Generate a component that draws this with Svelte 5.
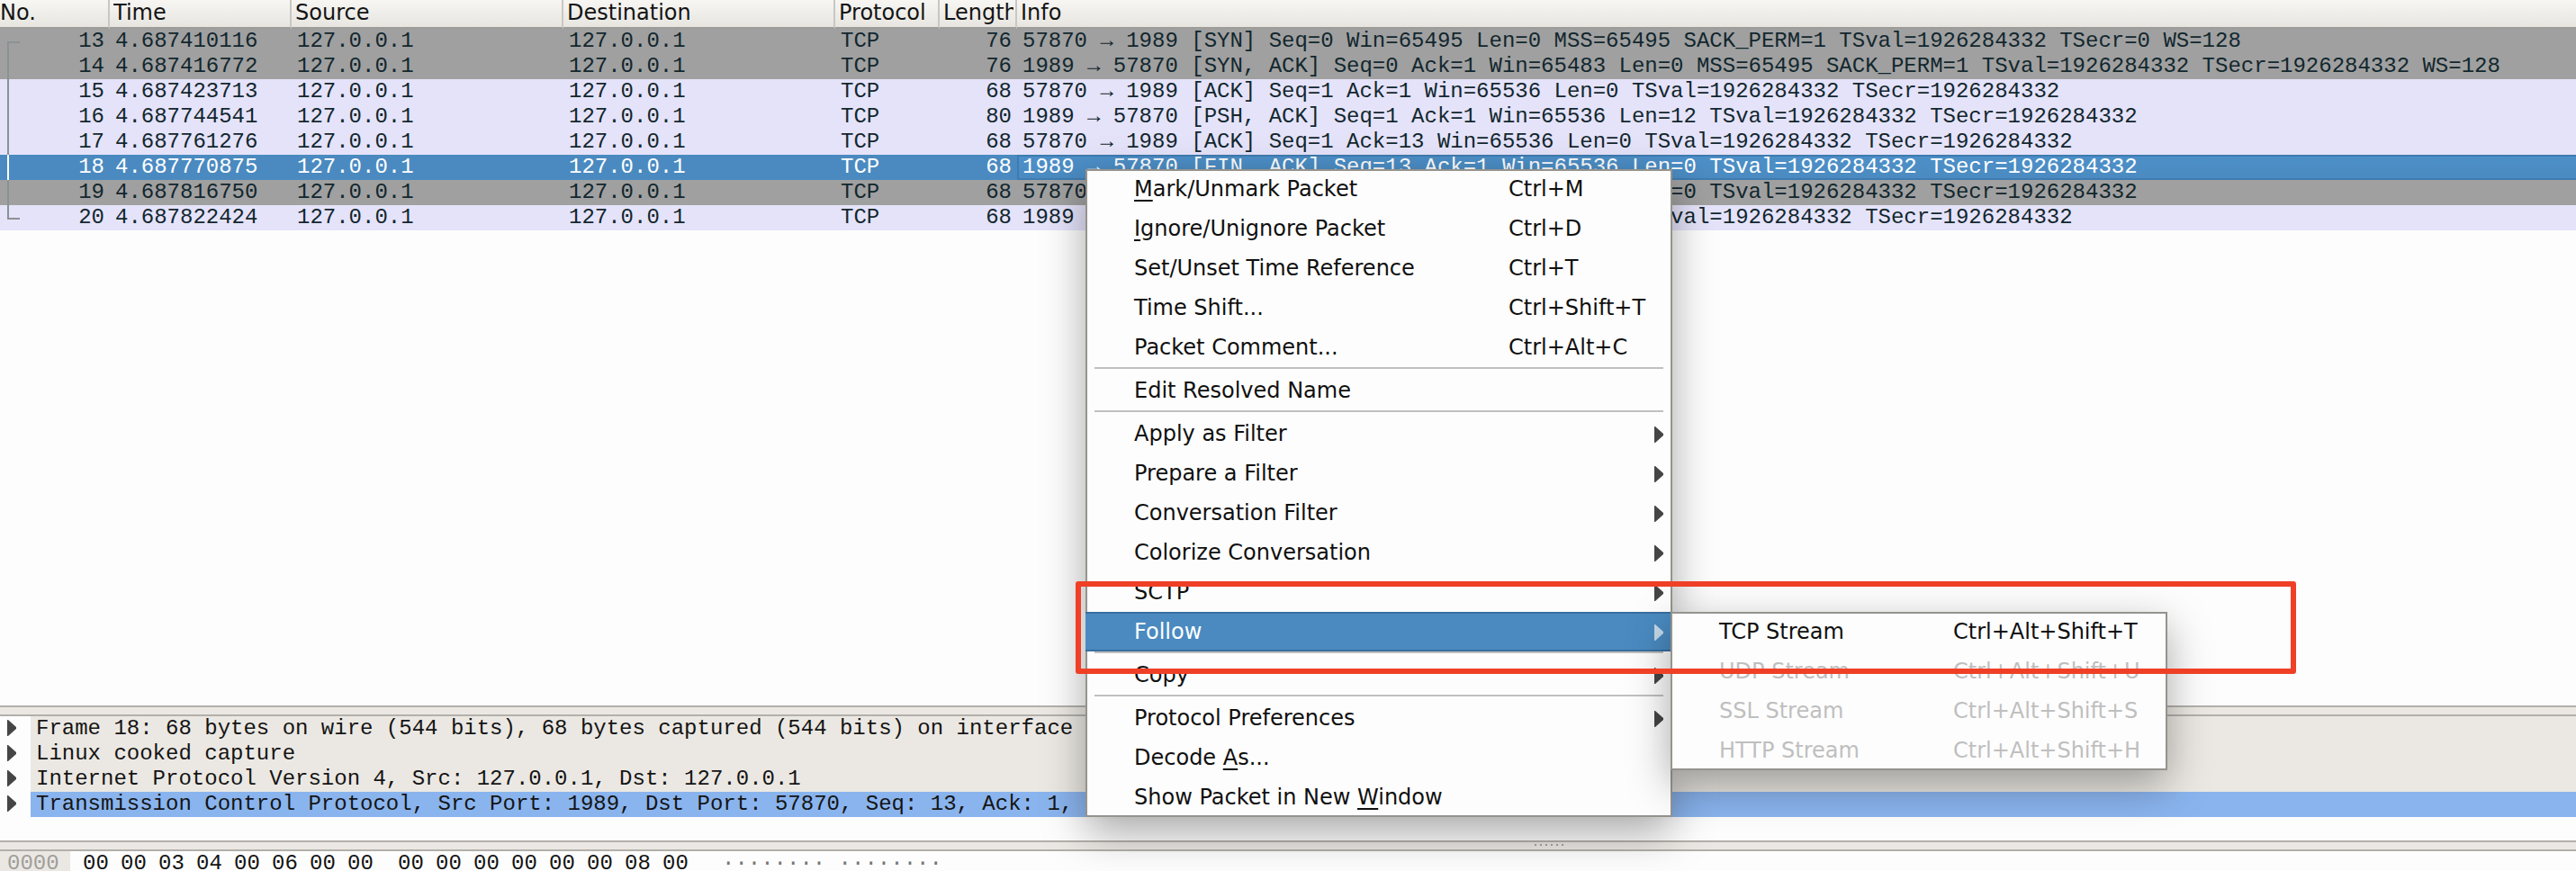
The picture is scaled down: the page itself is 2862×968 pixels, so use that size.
<script>
  const columns = ['No.', 'Time', 'Source', 'Destination', 'Protocol', 'Length', 'Info'];

  const packets = [
    { no: 13, time: '4.687410116', len: 76, kind: 'syn', link: 'start', info: '57870 → 1989 [SYN] Seq=0 Win=65495 Len=0 MSS=65495 SACK_PERM=1 TSval=1926284332 TSecr=0 WS=128' },
    { no: 14, time: '4.687416772', len: 76, kind: 'syn', link: 'mid', info: '1989 → 57870 [SYN, ACK] Seq=0 Ack=1 Win=65483 Len=0 MSS=65495 SACK_PERM=1 TSval=1926284332 TSecr=1926284332 WS=128' },
    { no: 15, time: '4.687423713', len: 68, kind: 'tcp', link: 'mid', info: '57870 → 1989 [ACK] Seq=1 Ack=1 Win=65536 Len=0 TSval=1926284332 TSecr=1926284332' },
    { no: 16, time: '4.687744541', len: 80, kind: 'tcp', link: 'mid', info: '1989 → 57870 [PSH, ACK] Seq=1 Ack=1 Win=65536 Len=12 TSval=1926284332 TSecr=1926284332' },
    { no: 17, time: '4.687761276', len: 68, kind: 'tcp', link: 'mid', info: '57870 → 1989 [ACK] Seq=1 Ack=13 Win=65536 Len=0 TSval=1926284332 TSecr=1926284332' },
    { no: 18, time: '4.687770875', len: 68, kind: 'selected', link: 'mid', info: '1989 → 57870 [FIN, ACK] Seq=13 Ack=1 Win=65536 Len=0 TSval=1926284332 TSecr=1926284332' },
    { no: 19, time: '4.687816750', len: 68, kind: 'syn', link: 'mid', info: '57870 → 1989 [FIN, ACK] Seq=1 Ack=14 Win=65536 Len=0 TSval=1926284332 TSecr=1926284332' },
    { no: 20, time: '4.687822424', len: 68, kind: 'tcp', link: 'end', info: '1989 → 57870 [ACK] Seq=14 Ack=2 Win=65536 Len=0 TSval=1926284332 TSecr=1926284332' }
  ];

  const details = [
    'Frame 18: 68 bytes on wire (544 bits), 68 bytes captured (544 bits) on interface 0',
    'Linux cooked capture',
    'Internet Protocol Version 4, Src: 127.0.0.1, Dst: 127.0.0.1',
    'Transmission Control Protocol, Src Port: 1989, Dst Port: 57870, Seq: 13, Ack: 1, Len: 0'
  ];
  let chosen = $state(3);

  const byteGroups = [
    ['00', '00', '03', '04', '00', '06', '00', '00'],
    ['00', '00', '00', '00', '00', '00', '08', '00']
  ];

  // Labels are split as [before, mnemonic, after].
  const menu = [
    { label: ['', 'M', 'ark/Unmark Packet'], keys: 'Ctrl+M' },
    { label: ['', 'I', 'gnore/Unignore Packet'], keys: 'Ctrl+D' },
    { label: ['Set/Unset Time Reference'], keys: 'Ctrl+T' },
    { label: ['Time Shift...'], keys: 'Ctrl+Shift+T' },
    { label: ['Packet Comment...'], keys: 'Ctrl+Alt+C' },
    null,
    { label: ['Edit Resolved Name'] },
    null,
    { label: ['Apply as Filter'], sub: true },
    { label: ['Prepare a Filter'], sub: true },
    { label: ['Conversation Filter'], sub: true },
    { label: ['Colorize Conversation'], sub: true },
    { label: ['SCTP'], sub: true },
    { label: ['Follow'], sub: true, open: true },
    null,
    { label: ['Copy'], sub: true },
    null,
    { label: ['Protocol Preferences'], sub: true },
    { label: ['Decode ', 'A', 's...'] },
    { label: ['Show Packet in New ', 'W', 'indow'] }
  ];

  const streams = [
    { name: 'TCP Stream', keys: 'Ctrl+Alt+Shift+T', on: true },
    { name: 'UDP Stream', keys: 'Ctrl+Alt+Shift+U', on: false },
    { name: 'SSL Stream', keys: 'Ctrl+Alt+Shift+S', on: false },
    { name: 'HTTP Stream', keys: 'Ctrl+Alt+Shift+H', on: false }
  ];
</script>

{#snippet arrow()}
  <svg class="arrow" viewBox="0 0 10 18" aria-hidden="true"><path d="M0 0H1L10 8V10L1 18H0Z" fill="currentColor" /></svg>
{/snippet}

<main class="window">
  <section class="list">
    <table>
      <colgroup>
        <col class="c-no" /><col class="c-time" /><col class="c-addr" /><col class="c-addr" />
        <col class="c-proto" /><col class="c-len" /><col />
      </colgroup>
      <thead>
        <tr>
          {#each columns as name}<th scope="col"><div>{name}</div></th>{/each}
        </tr>
      </thead>
      <tbody>
        {#each packets as p}
          <tr class={p.kind}>
            <td class="num"><span class="link {p.link}"></span>{p.no}</td>
            <td>{p.time}</td>
            <td>127.0.0.1</td>
            <td>127.0.0.1</td>
            <td>TCP</td>
            <td class="num">{p.len}</td>
            <td class="info">{p.info}</td>
          </tr>
        {/each}
      </tbody>
    </table>
  </section>

  <div class="splitter"></div>

  <section class="details">
    {#each details as line, i}
      <button class="detail" class:chosen={chosen === i} onclick={() => (chosen = i)}>
        <span class="twist">{@render arrow()}</span><span class="line">{line}</span>
      </button>
    {/each}
  </section>

  <div class="splitter">
    <span class="grip"><i></i><i></i><i></i><i></i><i></i><i></i></span>
  </div>

  <section class="bytes">
    <span class="offset">0000</span>
    <div class="hex">
      {#each byteGroups as group}
        <div class="group">{#each group as b}<span>{b}</span>{/each}</div>
      {/each}
    </div>
    <span class="ascii">········ ········</span>
  </section>

  <ul class="menu main" role="menu">
    {#each menu as item}
      {#if item}
        <li role="none">
          <button role="menuitem" class:open={item.open}>
            <span class="label">{item.label[0]}{#if item.label[1]}<u>{item.label[1]}</u>{item.label[2]}{/if}</span>
            {#if item.keys}<span class="keys">{item.keys}</span>{/if}
            {#if item.sub}{@render arrow()}{/if}
          </button>
        </li>
      {:else}
        <li class="sep" role="separator"></li>
      {/if}
    {/each}
  </ul>

  <ul class="menu sub" role="menu">
    {#each streams as s}
      <li role="none">
        <button role="menuitem" disabled={!s.on}>
          <span class="label">{s.name}</span><span class="keys">{s.keys}</span>
        </button>
      </li>
    {/each}
  </ul>

  <div class="highlight"></div>
</main>

<style>
  :global(body) {
    margin: 0;
    background: #fdfdfd;
  }
  .window {
    position: relative;
    display: flex;
    flex-direction: column;
    height: 100vh;
    overflow: hidden;
    background: #fdfdfd;
    color: #141414;
    font: 24px/28px 'Liberation Mono', monospace;
  }
  button {
    appearance: none;
    border: 0;
    margin: 0;
    padding: 0;
    background: none;
    color: inherit;
    font: inherit;
    text-align: left;
  }

  .list {
    flex: 1;
    min-height: 0;
    overflow: hidden;
  }
  table {
    width: 100%;
    table-layout: fixed;
    border-collapse: separate;
    border-spacing: 0;
  }
  .c-no { width: 122px; }
  .c-time { width: 202px; }
  .c-addr { width: 302px; }
  .c-proto { width: 116px; }
  .c-len { width: 86px; }
  th {
    box-sizing: border-box;
    height: 32px;
    padding: 0 2px 2px 4px;
    border-right: 2px solid #c9c7c3;
    border-bottom: 2px solid #9e9c98;
    background: linear-gradient(#f7f6f3, #e7e5e0);
    font: 24px/28px 'DejaVu Sans', sans-serif;
    text-align: left;
  }
  th:first-child { padding-left: 0; }
  th:last-child { border-right: 0; }
  th div {
    overflow: hidden;
    white-space: nowrap;
  }
  td {
    height: 28px;
    padding: 0 6px;
    overflow: hidden;
    white-space: nowrap;
    color: #12272e;
  }
  .num {
    position: relative;
    text-align: right;
  }
  .syn td { background: #a0a0a0; }
  .tcp td { background: #e5e3fa; }
  .selected td {
    background: #4a8ac0;
    color: #ffffff;
  }
  .selected .info {
    background: linear-gradient(#4d90c9, #4a8ac0);
    box-shadow: inset 0 2px #3f7bb0, inset 2px -2px #3f7bb0;
  }
  .link {
    position: absolute;
    left: 8px;
    top: 0;
    bottom: 0;
    width: 12px;
    border-left: 2px solid #8a9294;
  }
  .link.start {
    top: 14px;
    border-top: 2px solid #8a9294;
  }
  .link.end {
    bottom: 12px;
    border-bottom: 2px solid #8a9294;
  }
  .selected .link { border-color: #ffffff; }

  .splitter {
    box-sizing: border-box;
    height: 12px;
    flex: none;
    border: solid #b3b0ac;
    border-width: 2px 0;
    background: #ebe7e2;
  }
  .grip {
    display: flex;
    gap: 4px;
    padding: 2px 0 0 calc(60% - 12px);
  }
  .grip i {
    width: 2px;
    height: 2px;
    background: #a5a29d;
  }

  .details {
    flex: none;
    display: flex;
    flex-direction: column;
    padding-bottom: 26px;
  }
  .detail {
    display: flex;
    height: 28px;
  }
  .twist {
    width: 26px;
    padding: 4px 0 0 8px;
    color: #454545;
  }
  .line {
    flex: 1;
    padding-left: 6px;
    background: #ebe8e3;
    white-space: nowrap;
  }
  .chosen .line { background: #8ab4ee; }
  .arrow {
    display: block;
    width: 10px;
    height: 18px;
  }

  .bytes {
    flex: none;
    display: flex;
    height: 22px;
    overflow: hidden;
  }
  .offset {
    width: 70px;
    padding-left: 8px;
    background: #ebe8e3;
    color: #a09e9b;
  }
  .hex {
    display: flex;
    gap: 14px;
    padding-left: 14px;
  }
  .group { display: flex; }
  .group span { width: 42px; }
  .ascii {
    padding-left: 24px;
    color: #777777;
  }

  .menu {
    position: absolute;
    box-sizing: border-box;
    margin: 0;
    padding: 0;
    list-style: none;
    background: #fdfdfd;
    box-shadow: inset 0 0 0 2px #95938e, 0 16px 44px rgba(0, 0, 0, 0.34);
    font: 24px/28px 'DejaVu Sans', sans-serif;
    color: #101010;
  }
  .menu.main {
    left: 1206px;
    top: 188px;
    width: 652px;
  }
  .menu.sub {
    left: 1856px;
    top: 680px;
    width: 552px;
  }
  .menu button {
    box-sizing: border-box;
    display: flex;
    align-items: center;
    width: 100%;
    height: 44px;
    padding: 0 10px 0 54px;
    white-space: nowrap;
  }
  .menu button.open {
    width: calc(100% - 2px);
    padding-right: 8px;
    background: #4a8ac0;
    box-shadow: inset 0 2px #386f9f, inset 0 -2px #386f9f;
    color: #ffffff;
  }
  .menu button:disabled { color: #bfbfbf; }
  .label { flex: 1; }
  .keys { width: 172px; }
  .sub .keys { width: 228px; }
  .menu .arrow {
    color: #454545;
    margin-top: 2px;
  }
  .menu .open .arrow { color: #c4d9ea; }
  u {
    text-decoration-thickness: 2px;
    text-underline-offset: 4px;
  }
  .sep {
    height: 2px;
    margin: 0 10px 2px;
    background: #c0c0c0;
  }

  .highlight {
    position: absolute;
    left: 1195px;
    top: 646px;
    box-sizing: border-box;
    width: 1356px;
    height: 103px;
    border: 6px solid #ef4027;
    border-radius: 3px;
    pointer-events: none;
  }
</style>
